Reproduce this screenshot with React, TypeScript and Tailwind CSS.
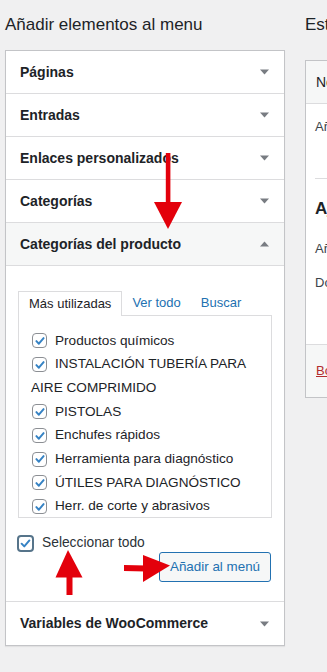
import React from "react";

const font = { fontFamily: "'Liberation Sans', Arial, sans-serif" };

function Chevron({ up = false }: { up?: boolean }) {
  return (
    <svg width="9" height="6" viewBox="0 0 9 6" className="shrink-0">
      {up ? (
        <polygon points="0,5.5 9,5.5 4.5,0.5" fill="#787c82" />
      ) : (
        <polygon points="0,0.5 9,0.5 4.5,5.5" fill="#787c82" />
      )}
    </svg>
  );
}

function Row({ title, up = false, active = false, last = false }: { title: string; up?: boolean; active?: boolean; last?: boolean }) {
  return (
    <div
      className={`h-[43px] flex items-center justify-between pl-[14px] pr-[15px] ${last ? "" : "border-b border-[#dcdcde]"} ${active ? "bg-[#f6f7f7]" : "bg-white"}`}
    >
      <span className="text-[14px] font-bold text-[#1d2327]">{title}</span>
      <Chevron up={up} />
    </div>
  );
}

function Check({ big = false }: { big?: boolean }) {
  if (big) {
    return (
      <span className="inline-flex w-[17px] h-[17px] rounded-[4px] border-[2px] border-[#56748a] bg-white items-center justify-center shrink-0">
        <svg width="13" height="13" viewBox="0 0 16 16">
          <path d="M3.2 8.2 L6.5 11.6 L12.8 4.2" fill="none" stroke="#3582c4" strokeWidth="2.4" strokeLinecap="round" strokeLinejoin="round" />
        </svg>
      </span>
    );
  }
  return (
    <span className="inline-flex w-[15px] h-[15px] rounded-[4px] border border-[#8c8f94] bg-white items-center justify-center shrink-0">
      <svg width="12" height="12" viewBox="0 0 16 16">
        <path d="M3.2 8.2 L6.5 11.6 L12.8 4.2" fill="none" stroke="#3582c4" strokeWidth="2.6" strokeLinecap="round" strokeLinejoin="round" />
      </svg>
    </span>
  );
}

function Item({ label }: { label: string }) {
  return (
    <div className="flex items-center gap-[8px] h-[23.7px]">
      <Check />
      <span>{label}</span>
    </div>
  );
}

export default function App() {
  return (
    <div className="relative w-[327px] h-[672px] overflow-hidden bg-[#f0f0f1] text-[#1d2327]" style={font}>
      <div className="flex gap-[20px] pl-[5px]">
        {/* Left column */}
        <div className="w-[280px] shrink-0">
          <h2 className="h-[50px] flex items-center text-[17px] font-normal text-[#1d2327]">Añadir elementos al menu</h2>
          <div className="border border-[#c3c4c7] bg-white shadow-[0_1px_1px_rgba(0,0,0,0.06)]">
            <Row title="Páginas" />
            <Row title="Entradas" />
            <Row title="Enlaces personalizados" />
            <Row title="Categorías" />
            <Row title="Categorías del producto" up active />
            <div className="border-b border-[#dcdcde] pt-[25px] pb-[19px] px-[12px] flex flex-col">
              {/* tabs */}
              <div className="flex h-[24px] text-[13px] relative z-10">
                <div className="px-[10px] border border-b-0 border-[#dcdcde] bg-white h-[25px] flex items-center text-[#1d2327]">Más utilizadas</div>
                <div className="px-[10px] flex items-center text-[#2271b1]">Ver todo</div>
                <div className="px-[10px] flex items-center text-[#2271b1]">Buscar</div>
              </div>
              <div className="h-[203px] w-[254px] border border-[#dcdcde] overflow-hidden pl-[13px] pt-[13px] text-[13.6px] text-[#1d2327]">
                <Item label="Productos químicos" />
                <Item label="INSTALACIÓN TUBERÍA PARA" />
                <div className="h-[23.7px] flex items-center -ml-[1px]">AIRE COMPRIMIDO</div>
                <Item label="PISTOLAS" />
                <Item label="Enchufes rápidos" />
                <Item label="Herramienta para diagnóstico" />
                <Item label="ÚTILES PARA DIAGNÓSTICO" />
                <Item label="Herr. de corte y abrasivos" />
              </div>
              <div className="mt-[15px] h-[20px] flex items-center gap-[8px] -ml-[1px] text-[13.8px]">
                <Check big />
                <span className="text-[#2c3338]">Seleccionar todo</span>
              </div>
              <div className="-mt-[1px] flex justify-end pr-[1px]">
                <div className="h-[30px] w-[112px] rounded-[3px] border border-[#2271b1] bg-[#f6f7f7] text-[#2271b1] text-[13.4px] flex items-center justify-center">
                  Añadir al menú
                </div>
              </div>
            </div>
            <Row title="Variables de WooCommerce" last />
          </div>
        </div>

        {/* Right column */}
        <div className="w-[300px] shrink-0">
          <h2 className="h-[50px] flex items-center text-[17px] font-normal whitespace-nowrap">Estructura del menú</h2>
          <div className="mt-[10px] border border-[#c3c4c7] bg-white">
            <div className="h-[43px] border-b border-[#dcdcde] bg-[#f6f7f7] flex items-center pl-[10px] text-[14px] whitespace-nowrap">Nombre del menú</div>
            <div className="px-[9px]">
              <div className="h-[75px] pt-[13px] text-[13px] text-[#3c434a] whitespace-nowrap border-b border-[#dcdcde]">Añade elementos del menú</div>
              <div className="h-[165px] pt-[17px] whitespace-nowrap">
                <div className="text-[17px] font-bold leading-[26px]">Ajustes del menú</div>
                <div className="text-[13px] text-[#3c434a] mt-[17px]">Añadir páginas</div>
                <div className="text-[13px] text-[#3c434a] mt-[14px]">Dónde se mostrará</div>
              </div>
            </div>
            <div className="h-[53px] border-t border-[#dcdcde] bg-[#f6f7f7] flex items-center pl-[10px] text-[13px] whitespace-nowrap">
              <span className="text-[#b32d2e] underline">Borrar menú</span>
            </div>
          </div>
        </div>
      </div>

      {/* red arrows overlay */}
      <svg className="absolute left-0 top-0 pointer-events-none" width="327" height="672" viewBox="0 0 327 672">
        <rect x="165.8" y="153" width="4.6" height="51" fill="#e3000b" />
        <polygon points="154,202 182,202 168,229" fill="#e3000b" />
        <polygon points="68,550 55.5,577.5 82.5,577.5" fill="#e3000b" />
        <rect x="66.5" y="576" width="6" height="19" fill="#e3000b" />
        <polygon points="124,565 146,565.5 146,571.5 124,571" fill="#e3000b" />
        <polygon points="143,555 170,565.5 143,582" fill="#e3000b" />
      </svg>
    </div>
  );
}
